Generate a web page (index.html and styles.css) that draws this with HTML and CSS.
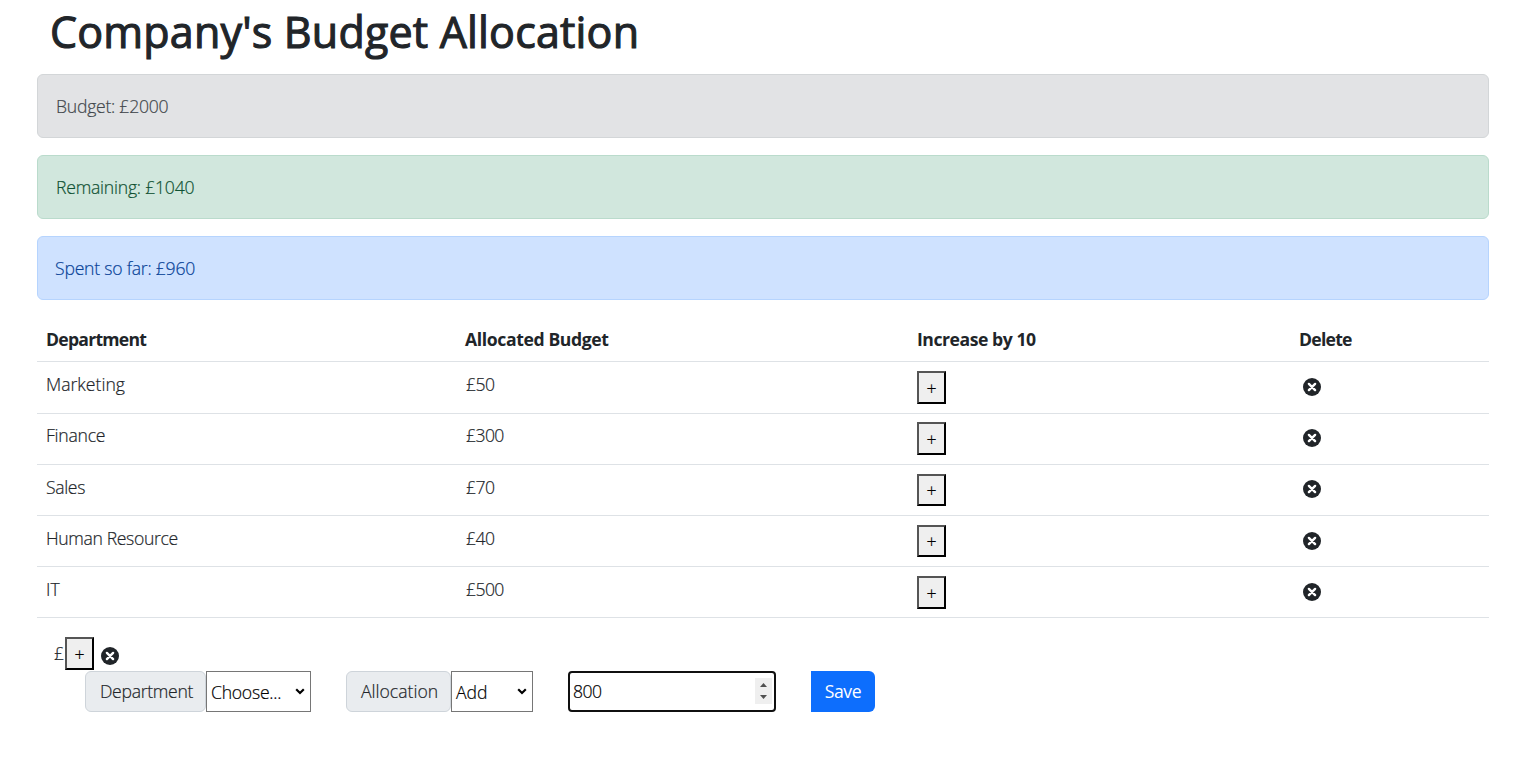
FILE: index.html
```html
<!DOCTYPE html>
<html lang="en">
<head>
<meta charset="utf-8">
<title>Company's Budget Allocation</title>
<link rel="stylesheet" href="styles.css">
</head>
<body>
<svg class="defs" width="0" height="0" aria-hidden="true">
  <symbol id="close" viewBox="0 0 18 18"><circle cx="9" cy="9" r="9" fill="#212529"/><path d="M5.900 5.900l6.200 6.200M12.100 5.900l-6.200 6.200" stroke="#fff" stroke-width="2.400" stroke-linecap="round"/></symbol>
  <symbol id="chevron" viewBox="0 0 10 7"><path d="M1.2 1.3L5 5l3.8-3.7" fill="none" stroke="#000" stroke-width="2.2"/></symbol>
</svg>
<div class="container">
  <h1 class="title"><span>Company's Budget Allocation</span></h1>
  <div class="alert alert-secondary"><span class="t-budget">Budget: £2000</span></div>
  <div class="alert alert-success"><span class="t-remaining">Remaining: £1040</span></div>
  <div class="alert alert-primary"><span class="t-spent">Spent so far: £960</span></div>
  <table class="table">
    <colgroup><col class="c1"><col class="c2"><col class="c3"><col class="c4"></colgroup>
    <thead><tr><th><span class="h1c">Department</span></th><th><span class="h2c">Allocated Budget</span></th><th><span class="h3c">Increase by 10</span></th><th><span class="h4c">Delete</span></th></tr></thead>
    <tbody>
      <tr><td><span class="d1">Marketing</span></td><td><span class="num">£50</span></td><td><button class="plus">+</button></td><td><svg class="close"><use href="#close"/></svg></td></tr>
      <tr><td><span class="d2">Finance</span></td><td><span class="num">£300</span></td><td><button class="plus">+</button></td><td><svg class="close"><use href="#close"/></svg></td></tr>
      <tr><td><span class="d3">Sales</span></td><td><span class="num">£70</span></td><td><button class="plus">+</button></td><td><svg class="close"><use href="#close"/></svg></td></tr>
      <tr><td><span class="d4">Human Resource</span></td><td><span class="num">£40</span></td><td><button class="plus">+</button></td><td><svg class="close"><use href="#close"/></svg></td></tr>
      <tr><td><span class="d5">IT</span></td><td><span class="num">£500</span></td><td><button class="plus">+</button></td><td><svg class="close"><use href="#close"/></svg></td></tr>
    </tbody>
  </table>
  <div class="new-item"><span class="pound">£</span><button class="plus">+</button><svg class="close"><use href="#close"/></svg></div>
  <div class="form">
    <div class="group"><label class="addon dept"><span>Department</span></label><div class="select choose"><span>Choose...</span><svg class="chev"><use href="#chevron"/></svg></div></div>
    <div class="group"><label class="addon alloc"><span>Allocation</span></label><div class="select add"><span>Add</span><svg class="chev"><use href="#chevron"/></svg></div></div>
    <div class="number"><span>800</span><svg class="spin" viewBox="0 0 17 26"><path d="M5 9h7L8.500 5zM5 17h7l-3.500 4z" fill="#505050"/></svg></div>
    <button class="save"><span>Save</span></button>
  </div>
</div>
</body>
</html>
```
FILE: styles.css
```css
* { box-sizing: border-box; }
body { margin: 0; background: #fff; color: #212529; font: 300 17.6px/26px "Open Sans", "Noto Sans", sans-serif; -webkit-text-stroke: 0.2px; }
span { white-space: nowrap; }
.defs { display: block; height: 0; }
.container { width: 1452px; margin-left: 37px; }
.title { margin: 0; height: 74px; padding: 5px 0 0 13px; font-size: 43px; line-height: 53px; font-weight: 400; letter-spacing: 0.19px; -webkit-text-stroke: 1.1px; }
.alert { height: 64px; margin-bottom: 17px; padding: 18px; line-height: 26px; border: 1px solid; border-radius: 6px; }
.alert-secondary { background: #e2e3e5; border-color: #d3d6d8; color: #41464b; }
.alert-success { background: #d1e7dd; border-color: #badbcc; color: #0f5132; }
.alert-primary { background: #cfe2ff; border-color: #b6d4fe; color: #084298; padding-left: 17px; }
.t-budget { letter-spacing: -0.25px; }
.t-remaining { letter-spacing: -0.22px; }
.t-spent { letter-spacing: -0.22px; }
.table { width: 1452px; table-layout: fixed; border-collapse: separate; border-spacing: 0; }
.c1 { width: 419px; }
.c2 { width: 452px; }
.c3 { width: 382px; }
.c4 { width: 199px; }
th, td { height: 51px; padding: 9px 9px 0; text-align: left; vertical-align: top; border-bottom: 1px solid #dee2e6; }
th { height: 45px; font-weight: 700; -webkit-text-stroke: 0; }
tbody tr:first-child td { height: 52px; }
tbody tr:nth-child(2) td { padding-top: 8px; }
td span, th span { display: block; height: 26px; }
.h1c { letter-spacing: -0.75px; }
.h2c { letter-spacing: -0.38px; }
.h3c { letter-spacing: -0.45px; }
.h4c { letter-spacing: -0.75px; }
.d2 { letter-spacing: -0.25px; }
.d3 { letter-spacing: -0.35px; }
.d4 { letter-spacing: -0.36px; }
.num { padding-left: 1px; letter-spacing: -0.6px; }
.plus { display: block; width: 29px; height: 33px; padding: 0; background: #efefef; color: #000; border: 2px solid; border-color: #555 #000 #000 #555; font: 300 17.6px/26px "Open Sans", sans-serif; text-align: center; }
.close { display: block; width: 18px; height: 18px; }
td .close { margin: 7px 0 0 4px; }
tbody tr:nth-child(3) .close { margin-top: 6px; }
tbody tr:nth-child(n+4) .close { margin-top: 6.5px; }
tbody tr:nth-child(3) .plus, tbody tr:nth-child(4) .plus { height: 32px; }
.new-item { display: flex; height: 53px; padding: 19px 0 0 17px; }
.pound { width: 11px; padding-top: 3px; }
.new-item .close { margin: 10px 0 0 7px; }
.form { display: flex; gap: 35px; margin-left: 48px; height: 41px; }
.group { display: flex; }
.addon { height: 41px; padding: 6px 0 0 14px; background: #e9ecef; border: 1px solid #ced4da; border-radius: 6px; }
.dept { width: 121px; letter-spacing: -0.3px; }
.alloc { width: 105px; }
.select { display: flex; justify-content: space-between; height: 41px; padding: 7px 5px 0 4px; color: #000; border: 1px solid #767676; background: #fff; }
.choose { width: 105px; letter-spacing: -0.25px; }
.add { width: 82px; }
.chev { width: 10px; height: 7px; margin-top: 9px; }
.number { display: flex; justify-content: space-between; width: 208px; height: 41px; padding: 5px 2px 0 3px; color: #000; border: 2px solid #101010; border-radius: 4px; letter-spacing: -0.6px; }
.spin { width: 17px; height: 26px; background: #efefef; }
.save { width: 64px; height: 41px; padding: 0 0 2px; border: 0; border-radius: 0 6px 6px 0; background: #0d6efd; color: #fff; font: 400 17.6px/26px "Open Sans", sans-serif; letter-spacing: -0.4px; -webkit-text-stroke: 0; }
```
